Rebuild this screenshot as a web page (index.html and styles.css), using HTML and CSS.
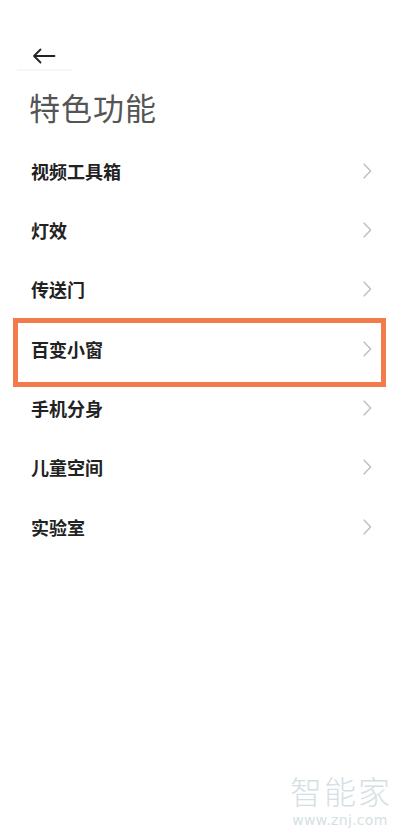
FILE: index.html
```html
<!DOCTYPE html>
<html lang="zh-CN">
<head>
<meta charset="utf-8">
<link rel="stylesheet" href="styles.css">
</head>
<body>
<div class="page">
  <div class="topbar">
    <svg class="back" width="24" height="16" viewBox="0 0 24 16"><path d="M22.5 8H2M8.5 1.5L2 8l6.5 6.5" fill="none" stroke="#222" stroke-width="1.8" stroke-linecap="round" stroke-linejoin="round"/></svg>
    <div class="faint"></div>
  </div>
  <h1 class="title">特色功能</h1>
  <ul class="list">
    <li class="row"><span>视频工具箱</span><svg class="chev" width="9" height="16" viewBox="0 0 9 16"><path d="M1.2 1.2L7.6 8L1.2 14.8" fill="none" stroke="#c2c2c2" stroke-width="1.6" stroke-linecap="round" stroke-linejoin="round"/></svg></li>
    <li class="row"><span>灯效</span><svg class="chev" width="9" height="16" viewBox="0 0 9 16"><path d="M1.2 1.2L7.6 8L1.2 14.8" fill="none" stroke="#c2c2c2" stroke-width="1.6" stroke-linecap="round" stroke-linejoin="round"/></svg></li>
    <li class="row"><span>传送门</span><svg class="chev" width="9" height="16" viewBox="0 0 9 16"><path d="M1.2 1.2L7.6 8L1.2 14.8" fill="none" stroke="#c2c2c2" stroke-width="1.6" stroke-linecap="round" stroke-linejoin="round"/></svg></li>
    <li class="row hl"><span>百变小窗</span><svg class="chev" width="9" height="16" viewBox="0 0 9 16"><path d="M1.2 1.2L7.6 8L1.2 14.8" fill="none" stroke="#c2c2c2" stroke-width="1.6" stroke-linecap="round" stroke-linejoin="round"/></svg></li>
    <li class="row"><span>手机分身</span><svg class="chev" width="9" height="16" viewBox="0 0 9 16"><path d="M1.2 1.2L7.6 8L1.2 14.8" fill="none" stroke="#c2c2c2" stroke-width="1.6" stroke-linecap="round" stroke-linejoin="round"/></svg></li>
    <li class="row"><span>儿童空间</span><svg class="chev" width="9" height="16" viewBox="0 0 9 16"><path d="M1.2 1.2L7.6 8L1.2 14.8" fill="none" stroke="#c2c2c2" stroke-width="1.6" stroke-linecap="round" stroke-linejoin="round"/></svg></li>
    <li class="row"><span>实验室</span><svg class="chev" width="9" height="16" viewBox="0 0 9 16"><path d="M1.2 1.2L7.6 8L1.2 14.8" fill="none" stroke="#c2c2c2" stroke-width="1.6" stroke-linecap="round" stroke-linejoin="round"/></svg></li>
  </ul>
  <div class="wm">
    <div class="wm-big">智能家</div>
    <div class="wm-small">www.znj.com</div>
  </div>
</div>
</body>
</html>
```
FILE: styles.css
```css
html, body {
  margin: 0;
  padding: 0;
  background: #fff;
}
.page {
  width: 400px;
  height: 838px;
  position: relative;
  overflow: hidden;
  font-family: "Noto Sans CJK SC", "Noto Sans", sans-serif;
}
.topbar {
  padding: 48px 0 0 32px;
  height: 30px;
  box-sizing: content-box;
}
.back {
  display: block;
}
.faint {
  margin: 5px 0 0 -15px;
  width: 55px;
  height: 2px;
  background: #f7f7f7;
}
.title {
  margin: 9px 0 0 29px;
  font-size: 31px;
  font-weight: 400;
  line-height: 40px;
  color: #555;
  letter-spacing: 1px;
}
.list {
  list-style: none;
  margin: 14px 0 0 0;
  padding: 0;
}
.row {
  height: 59.33px;
  display: flex;
  align-items: center;
  justify-content: space-between;
  padding: 0 28px 0 31px;
  box-sizing: border-box;
  font-size: 18px;
  font-weight: 700;
  color: #222;
  position: relative;
}
.row span {
  line-height: 24px;
}
.chev {
  display: block;
}
.hl::after {
  content: "";
  position: absolute;
  left: 13px;
  right: 14px;
  top: -1px;
  bottom: -9px;
  border: 5px solid #f37a4b;
}
.wm {
  position: absolute;
  right: 10px;
  bottom: 10px;
  width: 100px;
  text-align: center;
  color: #d6dfe4;
}
.wm-big {
  font-size: 32px;
  line-height: 36px;
  letter-spacing: 2px;
  margin-right: -2px;
  font-weight: 300;
}
.wm-small {
  font-family: "DejaVu Sans", sans-serif;
  font-size: 14px;
  line-height: 16px;
  margin-top: 4px;
  letter-spacing: 0.3px;
}
```
